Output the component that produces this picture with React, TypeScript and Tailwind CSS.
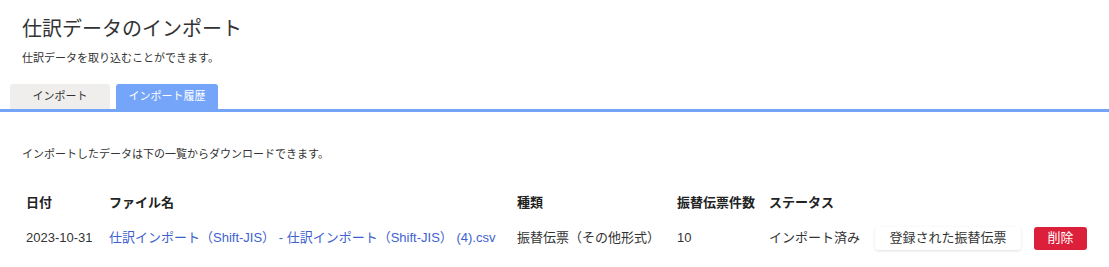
import React from "react";

const font = { fontFamily: '"Liberation Sans", "Noto Sans CJK JP", sans-serif' };

export default function App() {
  return (
    <div className="w-[1109px] h-[267px] bg-white text-[#333] overflow-hidden" style={font}>
      <div className="pl-[22px] pt-[15px]">
        <h1 className="text-[20px] leading-[28px] font-normal text-[#333]">仕訳データのインポート</h1>
        <p className="mt-[7px] text-[11px] leading-[16px] text-[#333]">仕訳データを取り込むことができます。</p>
      </div>
      <div className="mt-[18px] flex gap-[6px] pl-[10px] border-b-[3px] border-[#74a5f8]">
        <div className="w-[100px] h-[25px] flex items-center justify-center rounded-t-[3px] bg-[#efeeec] text-[11px] text-[#333]">
          インポート
        </div>
        <div className="w-[102px] h-[25px] flex items-center justify-center rounded-t-[3px] bg-[#74a5f8] text-[11px] text-white">
          インポート履歴
        </div>
      </div>
      <div className="pl-[22px]">
        <p className="mt-[34px] text-[11px] leading-[16px] text-[#333]">
          インポートしたデータは下の一覧からダウンロードできます。
        </p>
        <div className="mt-[24px] grid grid-cols-[83px_408px_160px_92px_106px_1fr] text-[13px]">
          <div className="h-[34px] flex items-center pl-[4px] font-bold text-[#222]">日付</div>
          <div className="h-[34px] flex items-center pl-[4px] font-bold text-[#222]">ファイル名</div>
          <div className="h-[34px] flex items-center pl-[4px] font-bold text-[#222]">種類</div>
          <div className="h-[34px] flex items-center pl-[4px] font-bold text-[#222]">振替伝票件数</div>
          <div className="h-[34px] flex items-center pl-[4px] font-bold text-[#222]">ステータス</div>
          <div className="h-[34px]"></div>

          <div className="h-[36px] flex items-center pl-[4px]">2023-10-31</div>
          <div className="h-[36px] flex items-center pl-[4px] whitespace-nowrap">
            <a className="text-[#3d5fd0]" href="#">仕訳インポート（Shift-JIS） - 仕訳インポート（Shift-JIS） (4).csv</a>
          </div>
          <div className="h-[36px] flex items-center pl-[4px] whitespace-nowrap">振替伝票（その他形式）</div>
          <div className="h-[36px] flex items-center pl-[4px]">10</div>
          <div className="h-[36px] flex items-center pl-[4px] whitespace-nowrap">インポート済み</div>
          <div className="h-[36px] flex items-center pl-[4px] gap-[13px]">
            <button className="w-[146px] h-[23px] flex items-center justify-center rounded-[3px] bg-white text-[13px] text-[#333] shadow-[0_1px_3px_rgba(0,0,0,0.13)]">
              登録された振替伝票
            </button>
            <button className="w-[53px] h-[23px] flex items-center justify-center rounded-[3px] bg-[#dc1f3a] text-[13px] text-white">
              削除
            </button>
          </div>
        </div>
      </div>
    </div>
  );
}
